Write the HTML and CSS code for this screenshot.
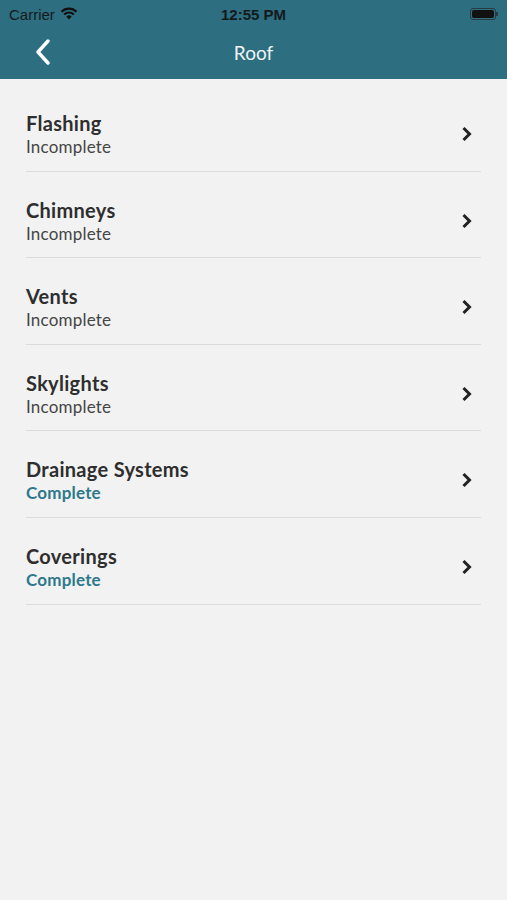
FILE: index.html
```html
<!DOCTYPE html>
<html lang="en">
<head>
    <meta charset="UTF-8">
    <title>Roof</title>
    <link rel="stylesheet" href="styles.css">
</head>
<body>
<div class="header">
    <div class="status">
        <div class="status-left">
            <span>Carrier</span>
            <svg class="wifi" width="18" height="13" viewBox="0 0 18 13">
                <path d="M9 12.5 L6.3 9.6 A3.9 3.9 0 0 1 11.7 9.6 Z" fill="#111"/>
                <path d="M4.2 7.5 A6.8 6.8 0 0 1 13.8 7.5" stroke="#111" stroke-width="2.2" fill="none"/>
                <path d="M1.5 4.7 A10.6 10.6 0 0 1 16.5 4.7" stroke="#111" stroke-width="2.2" fill="none"/>
            </svg>
        </div>
        <div class="time">12:55 PM</div>
        <div class="status-right">
            <div class="battery"><div class="battery-fill"></div></div>
            <div class="battery-tip"></div>
        </div>
    </div>
    <div class="nav">
        <svg class="back" width="16" height="26" viewBox="0 0 16 26">
            <path d="M13 2 L3 13 L13 24" stroke="#fff" stroke-width="3.4" fill="none" stroke-linecap="round" stroke-linejoin="round"/>
        </svg>
        <div class="title">Roof</div>
    </div>
</div>
<ul class="list">
    <li class="row">
        <div class="text"><div class="name">Flashing</div><div class="state">Incomplete</div></div>
        <svg class="chev" width="12" height="16" viewBox="0 0 12 16"><path d="M2.5 2 L8.5 8 L2.5 14" stroke="#222" stroke-width="3" fill="none"/></svg>
    </li>
    <li class="row">
        <div class="text"><div class="name">Chimneys</div><div class="state">Incomplete</div></div>
        <svg class="chev" width="12" height="16" viewBox="0 0 12 16"><path d="M2.5 2 L8.5 8 L2.5 14" stroke="#222" stroke-width="3" fill="none"/></svg>
    </li>
    <li class="row">
        <div class="text"><div class="name">Vents</div><div class="state">Incomplete</div></div>
        <svg class="chev" width="12" height="16" viewBox="0 0 12 16"><path d="M2.5 2 L8.5 8 L2.5 14" stroke="#222" stroke-width="3" fill="none"/></svg>
    </li>
    <li class="row">
        <div class="text"><div class="name">Skylights</div><div class="state">Incomplete</div></div>
        <svg class="chev" width="12" height="16" viewBox="0 0 12 16"><path d="M2.5 2 L8.5 8 L2.5 14" stroke="#222" stroke-width="3" fill="none"/></svg>
    </li>
    <li class="row">
        <div class="text"><div class="name">Drainage Systems</div><div class="state done">Complete</div></div>
        <svg class="chev" width="12" height="16" viewBox="0 0 12 16"><path d="M2.5 2 L8.5 8 L2.5 14" stroke="#222" stroke-width="3" fill="none"/></svg>
    </li>
    <li class="row">
        <div class="text"><div class="name">Coverings</div><div class="state done">Complete</div></div>
        <svg class="chev" width="12" height="16" viewBox="0 0 12 16"><path d="M2.5 2 L8.5 8 L2.5 14" stroke="#222" stroke-width="3" fill="none"/></svg>
    </li>
</ul>
</body>
</html>
```
FILE: styles.css
```css
*{
    margin: 0;
    padding: 0;
    box-sizing: border-box;
}
body{
    width: 507px;
    height: 900px;
    background: #f2f2f2;
    font-family: Lato, "Open Sans", sans-serif;
    overflow: hidden;
}
.header{
    height: 79px;
    background: #2d6e80;
}
.status{
    height: 28px;
    display: flex;
    align-items: center;
    justify-content: space-between;
    padding: 0 9px 0 9px;
    font-family: "Liberation Sans", sans-serif;
    font-size: 15px;
    color: #141a1c;
}
.status-left{
    width: 120px;
    display: flex;
    align-items: center;
    gap: 5px;
}
.wifi{
    margin-top: -2px;
}
.time{
    font-weight: bold;
}
.status-right{
    width: 120px;
    display: flex;
    justify-content: flex-end;
    align-items: center;
}
.battery{
    width: 26px;
    height: 12px;
    border: 1px solid #2a3a40;
    border-radius: 3px;
    padding: 1px;
}
.battery-fill{
    width: 100%;
    height: 100%;
    background: #111;
    border-radius: 2px;
}
.battery-tip{
    width: 2px;
    height: 4px;
    background: #2a3a40;
    border-radius: 0 1px 1px 0;
}
.nav{
    height: 51px;
    position: relative;
    display: flex;
    align-items: center;
    justify-content: center;
}
.back{
    position: absolute;
    left: 35px;
    top: 11px;
}
.title{
    color: #eef4f6;
    font-size: 19px;
    margin-top: -3px;
}
.list{
    list-style: none;
    padding: 6px 26px 0 26px;
}
.row{
    height: 86.6px;
    border-bottom: 1px solid #dcdcdc;
    display: flex;
    align-items: flex-start;
    justify-content: space-between;
    padding: 27px 8px 0 0;
}
.name{
    font-size: 20px;
    font-weight: bold;
    color: #2e2e2e;
    line-height: 23px;
    letter-spacing: 0.3px;
}
.state{
    font-size: 17px;
    color: #454545;
    line-height: 23px;
    letter-spacing: 0.2px;
}
.state.done{
    color: #2e788b;
    font-weight: bold;
}
.chev{
    margin-top: 14px;
}
```
